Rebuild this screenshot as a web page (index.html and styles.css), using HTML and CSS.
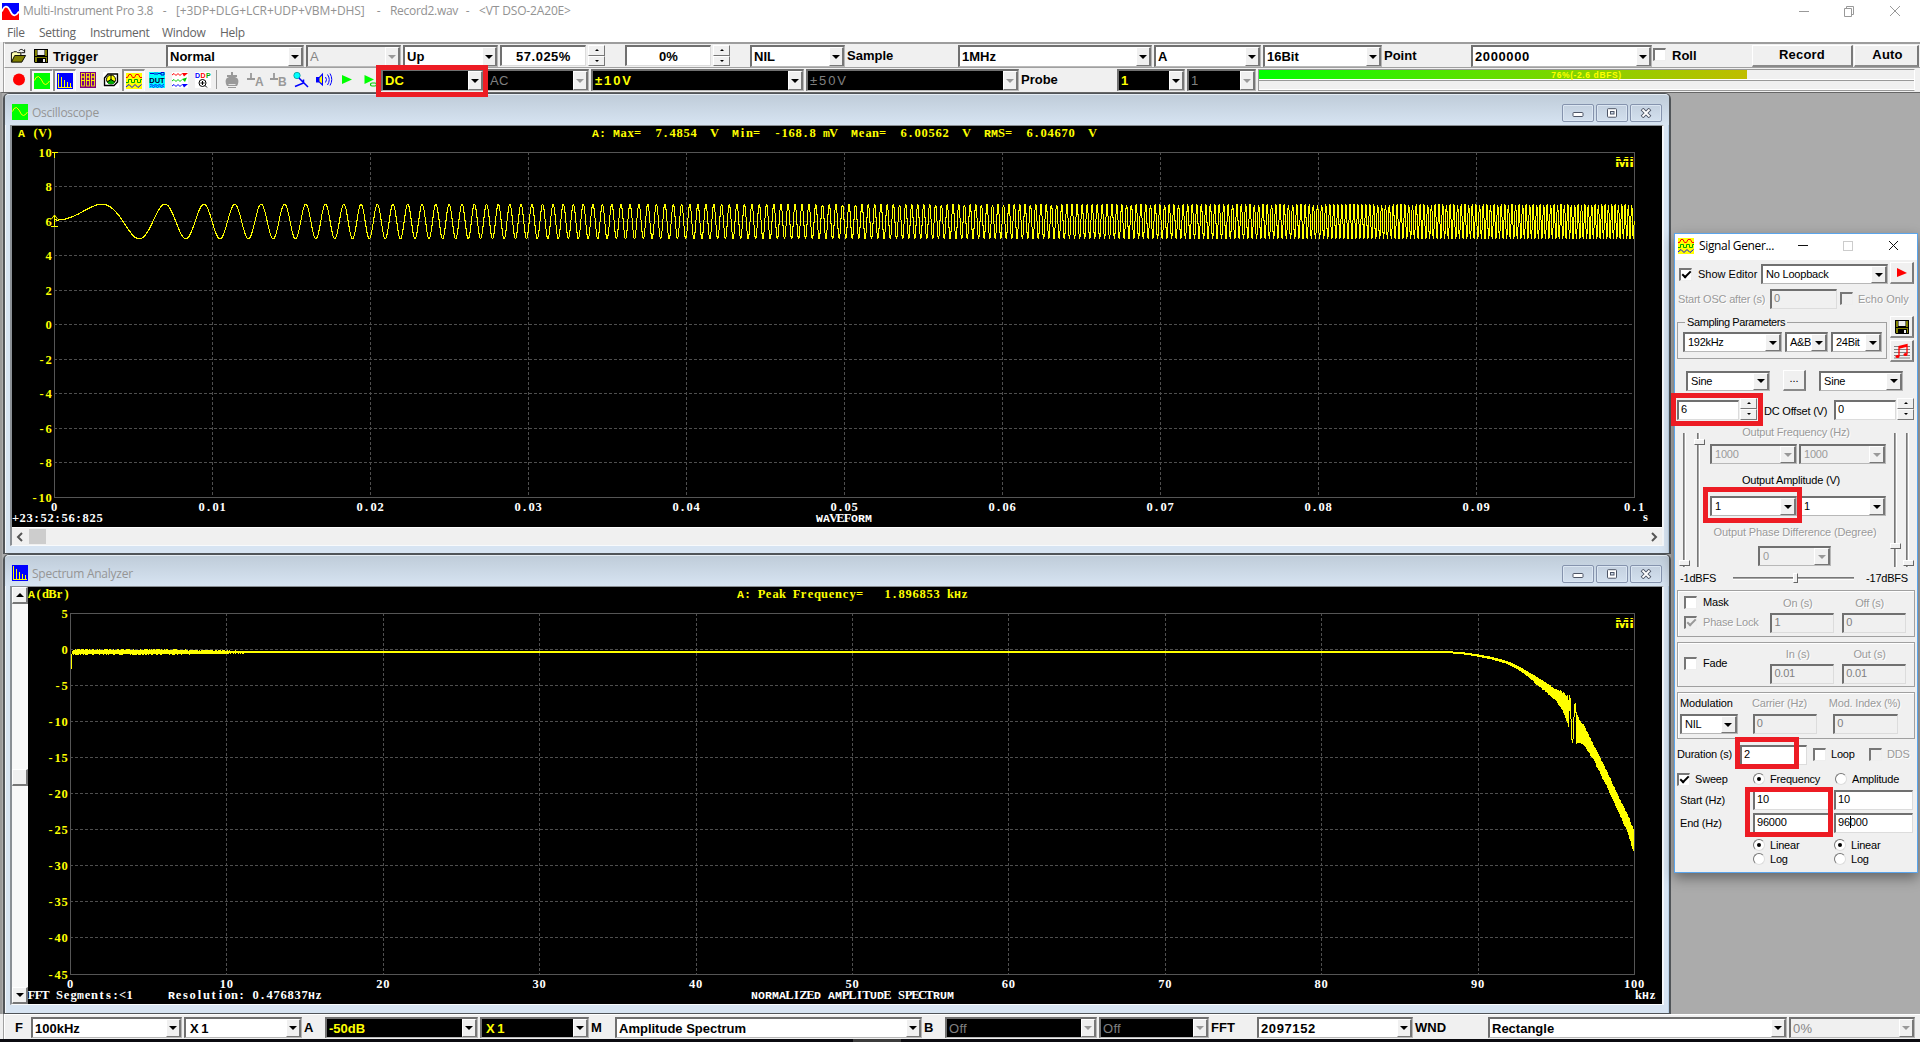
FILE: index.html
```html
<!DOCTYPE html>
<html lang="en">
<head>
<meta charset="utf-8">
<title>Multi-Instrument Pro 3.8</title>
<link rel="stylesheet" href="styles.css">
</head>
<body>
<svg class="defs" width="0" height="0">
  <defs>
    <symbol id="i-scope" viewBox="0 0 16 16"><rect width="16" height="16" fill="#0f0"/><path d="M0.5 7.5L2 4.5L4.5 3.5L7 6L9.5 10.5L11.5 11.5L13.5 10.5L15.500 8" fill="none" stroke="#ff0"/></symbol>
    <symbol id="i-spec" viewBox="0 0 16 16"><rect width="16" height="16" fill="#00f"/><path d="M1.500 1V14M4.500 4V14M7.500 7V14M10.500 9V14M13.500 10V14M1 14.500H15" stroke="#ff0" fill="none"/></symbol>
    <symbol id="i-gen" viewBox="0 0 16 16"><rect width="16" height="16" fill="#ff0"/><path d="M0 4.500H1.500L3 1.500H5L6.500 4.500H8.500L10 1.500H12.500L14 4.500H16" stroke="#f00" fill="none"/><path d="M0 9.500H2.500V6.500H5.500V9.500H8.500V6.500H11.500V9.500H14.500V6.500H16" stroke="#0a0" fill="none"/><path d="M0 14L3 11.500L6 14.500L9 11.500L12 14.500L15.500 11.500" stroke="#00f" fill="none"/></symbol>
    <symbol id="i-save" viewBox="0 0 16 16"><path d="M1 1H15V15H2L1 14Z" fill="#000"/><path d="M2 2H4V8H2ZM12 2H14V8H12Z" fill="#808000"/><path d="M2 9H14V10H2ZM2 10H4V14H2ZM13 10H14V14H13Z" fill="#808000"/><path d="M4.500 2H11.500V7H4.500ZM10 11H12V14H10Z" fill="#efefef"/></symbol>
  </defs>
</svg>

<header class="titlebar">
  <svg class="app-icon" viewBox="0 0 16 16"><rect width="16" height="16" fill="#00f"/><path d="M0 8C2 2 5 2 7.500 7C10 13 13 13 16 8V16H0Z" fill="#f00"/><path d="M0 8C2 2 5 2 7.500 7C10 13 13 13 16 8" fill="none" stroke="#fff" stroke-width="1.600"/></svg>
  <span class="t-name">Multi-Instrument Pro 3.8</span><span class="t-dash">-</span>
  <span class="t-opts">[+3DP+DLG+LCR+UDP+VBM+DHS]</span><span class="t-dash">-</span>
  <span class="t-file">Record2.wav</span><span class="t-dash">-</span>
  <span class="t-dev">&lt;VT DSO-2A20E&gt;</span>
  <svg class="sysbtns" viewBox="0 0 120 20"><path d="M0 10.500H10M45.500 7.500H52.500V15.500H45.500ZM47.500 7V5.500H54.500V13.500H53M91 5L101 15M101 5L91 15" fill="none" stroke="#999"/></svg>
</header>
<nav class="menubar"><span>File</span><span>Setting</span><span>Instrument</span><span>Window</span><span>Help</span></nav>

<section class="toolbar tb-top">
  <div class="lead">
    <svg class="ic-open" viewBox="0 0 18 16"><path d="M1.500 14V4.500H3L4 3.500H7L8 4.500H11.500V7" fill="#ffffb0" stroke="#000"/><path d="M1.500 14.500L5 7.500H16.500L12.500 14.500Z" fill="#808000" stroke="#000"/><path d="M9.500 2.500C11 .5 13 .5 15 3M15.500 1V4.500H12" fill="none" stroke="#000"/></svg>
    <svg class="ic-disk"><use href="#i-save"/></svg>
    <span class="lbl">Trigger</span>
  </div>
  <div class="combo"><span>Normal</span><i></i></div>
  <div class="combo off"><span>A</span><i></i></div>
  <div class="combo"><span>Up</span><i></i></div>
  <div class="edit wide-num">57.025%</div><div class="spin"><i></i><i></i></div>
  <div class="edit">0%</div><div class="spin"><i></i><i></i></div>
  <div class="combo"><span>NIL</span><i></i></div>
  <span class="lbl">Sample</span>
  <div class="combo"><span>1MHz</span><i></i></div>
  <div class="combo"><span>A</span><i></i></div>
  <div class="combo"><span>16Bit</span><i></i></div>
  <span class="lbl">Point</span>
  <div class="combo"><span class="spaced">2000000</span><i></i></div>
  <div class="roll"><b class="check"></b><span>Roll</span></div>
  <button class="btn">Record</button><button class="btn">Auto</button>
</section>

<section class="toolbar tb-mid">
  <div class="icons">
    <b class="cell"><svg viewBox="0 0 16 16"><circle cx="8" cy="7.500" r="6" fill="#f00"/></svg></b>
    <b class="cell on"><svg><use href="#i-scope"/></svg></b>
    <b class="cell on"><svg><use href="#i-spec"/></svg></b>
    <b class="cell"><svg viewBox="0 0 16 16"><rect width="16" height="16" fill="#800080"/><g fill="none" stroke="#ff0" stroke-width=".8"><rect x="1.500" y="1.500" width="3" height="3.500"/><rect x="6.500" y="1.500" width="3" height="3.500"/><rect x="11.500" y="1.500" width="3" height="3.500"/><rect x="1.500" y="5" width="3" height="3.500"/><rect x="6.500" y="5" width="3" height="3.500"/><rect x="11.500" y="5" width="3" height="3.500"/><rect x="1.500" y="8.500" width="3" height="5.500"/><rect x="6.500" y="8.500" width="3" height="5.500"/><rect x="11.500" y="8.500" width="3" height="5.500"/></g></svg></b>
    <b class="cell"><svg viewBox="0 0 16 16"><rect width="16" height="16" fill="#fff"/><path d="M1.500 6L5 2H14.500V10L11 13.500H1.500Z" fill="#fff" stroke="#000" stroke-width="1.400"/><circle cx="8" cy="7.500" r="4.500" fill="#ff0" stroke="#000"/><path d="M4 10L8 7L12 10L10 12H6Z" fill="#0a0"/><path d="M8 3V7.500L4 10M8 7.500L12 10" stroke="#000" fill="none"/></svg></b>
    <b class="cell on"><svg><use href="#i-gen"/></svg></b>
    <b class="cell"><svg viewBox="0 0 16 16"><rect width="16" height="16" fill="#0ff"/><path d="M1 1.500H5M6 .5V3M8 .5V3M9 1.500H12M12 .5V3H15V.5Z" stroke="#00c" fill="none"/><text x="8" y="10.500" class="dut">DUT</text><path d="M1 13L2.500 12L4.500 14L6.500 12L8.500 14L10.500 12L12.500 14L15 12M1 15L2.500 14L4.500 15.500L6.500 14L8.500 15.500L10.500 14L12.500 15.500L15 14" stroke="#00f" fill="none" stroke-width=".8"/></svg></b>
    <b class="cell"><svg viewBox="0 0 16 16"><rect width="16" height="16" fill="#fff"/><g fill="none"><path d="M0 3L2 1.500L4 3.500L6 1.500L8 3.500L10 1.500" stroke="#f00"/><path d="M0 9L2 7.500L4 9.500L6 7.500L8 9.500L10 7.500" stroke="#0c0"/><path d="M0 14L2 12.500L4 14.500L6 12.500L8 14.500L10 12.500" stroke="#00f"/></g><path d="M10 1H16L12 4.500Z" fill="#f00"/><path d="M10 7L15 5.500L13 10Z" fill="#0c0"/><path d="M10 12H16L12 15.500Z" fill="#00f"/></svg></b>
    <b class="cell"><svg viewBox="0 0 16 16"><rect width="16" height="16" fill="#fff"/><text y="6" class="ddp"><tspan x="0" fill="#00f">D</tspan><tspan x="5.500" fill="#f00">D</tspan><tspan x="11" fill="#0a0">P</tspan></text><circle cx="7.500" cy="11" r="3.500" fill="none" stroke="#000"/><path d="M5.500 11H9.500M7.500 9V13M10 13.500L12 15.500" stroke="#000"/></svg></b>
    <b class="sep"></b>
    <b class="cell"><svg viewBox="0 0 16 16" fill="#999"><path d="M7 0H9V3H13V5H11C14 6 15 8 14 12L13 14H3L2 12C1 8 2 6 5 5H3V3H7ZM4 15H12V16H4Z"/><path d="M5 12H11L12 13H4Z" fill="#e4e4e4"/></svg></b>
    <b class="cell"><svg viewBox="0 0 16 16"><path d="M4 1V7M0 7H8" stroke="#999" stroke-width="1.800"/><text x="8" y="14" class="ab">A</text></svg></b>
    <b class="cell"><svg viewBox="0 0 16 16"><path d="M4 1V7M0 7H8" stroke="#999" stroke-width="1.800"/><text x="8" y="14" class="ab">B</text></svg></b>
    <b class="cell"><svg viewBox="0 0 16 16"><circle cx="4" cy="3.500" r="3.200" fill="#0ff" stroke="#088" stroke-width=".7"/><path d="M6 6L15 15M10.500 7.500V11L2 14.500" stroke="#00f" fill="none" stroke-width="1.500"/></svg></b>
    <b class="cell"><svg viewBox="0 0 16 16"><path d="M0 5H3L7 .7V14.300L3 10.500H0Z" fill="#00f"/><path d="M3.500 6L6 3.500V11.500L3.500 9.500Z" fill="#ff0"/><path d="M9.500 5Q11.500 7.500 9.500 10.500M11.500 2.500Q15 7.500 11.500 13M14 1.500Q17.500 7.500 14 13.500" stroke="#00f" fill="none"/></svg></b>
    <b class="cell"><svg viewBox="0 0 16 16"><path d="M3 3L13 7.500L3 12Z" fill="#0f0"/></svg></b>
    <b class="cell"><svg viewBox="0 0 16 16"><path d="M2.500 3L12 7.500L2.500 12Z" fill="#0f0"/><rect x="8.500" y="11" width="6" height="3" rx="1.500" fill="none" stroke="#0c0" stroke-width="1.200"/></svg></b>
  </div>
  <div class="combo dark"><span>DC</span><i></i></div>
  <div class="combo dark off"><span>AC</span><i></i></div>
  <div class="combo dark"><span class="volt">±10V</span><i></i></div>
  <div class="combo dark off"><span class="volt">±50V</span><i></i></div>
  <span class="lbl">Probe</span>
  <div class="combo dark"><span>1</span><i></i></div>
  <div class="combo dark off"><span>1</span><i></i></div>
  <div class="meter"><div class="level"><em></em><span>76%(-2.6 dBFS)</span></div><div class="level"></div></div>
</section>

<main class="mdi">
  <section class="child">
    <div class="ctitle"><svg><use href="#i-scope"/></svg><span>Oscilloscope</span>
      <div class="cbtns">
        <b><svg viewBox="0 0 12 10"><rect x="1" y="4.500" width="10" height="4" rx=".8" fill="#fff" stroke="#4d5566"/></svg></b>
        <b><svg viewBox="0 0 12 10"><rect x="1.500" y=".7" width="9" height="8.500" rx=".8" fill="#fff" stroke="#4d5566"/><rect x="4.500" y="3.500" width="3.500" height="2.500" fill="#cfdcea" stroke="#4d5566"/></svg></b>
        <b><svg viewBox="0 0 12 10"><path d="M2 1L10 9M10 1L2 9" stroke="#4d5566" stroke-width="3.800"/><path d="M2.500 1.500L9.500 8.500M9.500 1.500L2.500 8.500" stroke="#fff" stroke-width="1.800"/></svg></b>
      </div></div>
    <div class="client">
      <svg id="scope" class="plot" width="1650" height="401" viewBox="12 126 1650 401"></svg>
      <div class="hscroll"><svg viewBox="0 0 8 10"><path d="M6 1L2 5L6 9" fill="none" stroke="#555" stroke-width="2"/></svg><i></i><svg class="end" viewBox="0 0 8 10"><path d="M2 1L6 5L2 9" fill="none" stroke="#555" stroke-width="2"/></svg></div>
    </div>
  </section>
  <section class="child">
    <div class="ctitle"><svg><use href="#i-spec"/></svg><span>Spectrum Analyzer</span>
      <div class="cbtns">
        <b><svg viewBox="0 0 12 10"><rect x="1" y="4.500" width="10" height="4" rx=".8" fill="#fff" stroke="#4d5566"/></svg></b>
        <b><svg viewBox="0 0 12 10"><rect x="1.500" y=".7" width="9" height="8.500" rx=".8" fill="#fff" stroke="#4d5566"/><rect x="4.500" y="3.500" width="3.500" height="2.500" fill="#cfdcea" stroke="#4d5566"/></svg></b>
        <b><svg viewBox="0 0 12 10"><path d="M2 1L10 9M10 1L2 9" stroke="#4d5566" stroke-width="3.800"/><path d="M2.500 1.500L9.500 8.500M9.500 1.500L2.500 8.500" stroke="#fff" stroke-width="1.800"/></svg></b>
      </div></div>
    <div class="client side">
      <div class="vscroll"><i class="up"></i><i class="thumb"></i><i class="down"></i></div>
      <svg id="spectrum" class="plot" width="1634" height="417" viewBox="28 587 1634 417"></svg>
    </div>
  </section>
</main>

<footer class="toolbar tb-bottom">
  <span class="lbl f">F</span>
  <div class="combo"><span>100kHz</span><i></i></div>
  <div class="combo"><span class="mult">X1</span><i></i></div>
  <span class="lbl">A</span>
  <div class="combo dark"><span>-50dB</span><i></i></div>
  <div class="combo dark"><span class="mult">X1</span><i></i></div>
  <span class="lbl">M</span>
  <div class="combo"><span>Amplitude Spectrum</span><i></i></div>
  <span class="lbl">B</span>
  <div class="combo dark off"><span>Off</span><i></i></div>
  <div class="combo dark off"><span>Off</span><i></i></div>
  <span class="lbl">FFT</span>
  <div class="combo"><span class="spaced">2097152</span><i></i></div>
  <span class="lbl">WND</span>
  <div class="combo"><span>Rectangle</span><i></i></div>
  <div class="combo off"><span>0%</span><i></i></div>
</footer>
<div class="taskedge"><i></i></div>

<aside class="siggen">
  <div class="sg-title"><svg class="sg-icon"><use href="#i-gen"/></svg><span>Signal Gener...</span><svg class="sg-sys" viewBox="0 0 116 24"><path d="M8 12.500H18M99 8L108 17M108 8L99 17" stroke="#111" fill="none"/><rect x="53.500" y="8.500" width="9" height="9" stroke="#ccc" fill="none"/></svg></div>

  <div class="row r-edit"><b class="check ticked"></b><span class="w-show">Show Editor</span><div class="combo w-loop"><span>No Loopback</span><i></i></div><button class="btn sq"><svg viewBox="0 0 16 16"><path d="M3 3L13 8L3 12Z" fill="#f00"/></svg></button></div>
  <div class="row r-osc dis"><span class="w-osc">Start OSC after (s)</span><div class="edit w67">0</div><b class="check"></b><span>Echo Only</span></div>
  <div class="row r-samp">
    <fieldset><legend>Sampling Parameters</legend><div class="combo w-rate"><span>192kHz</span><i></i></div><div class="combo w-ch"><span>A&amp;B</span><i></i></div><div class="combo w-bit"><span>24Bit</span><i></i></div></fieldset>
    <div class="sidebtns"><button class="btn sq"><svg><use href="#i-save"/></svg></button><button class="btn sq"><svg viewBox="0 0 16 16"><path d="M0 3.500H16M0 6.500H16M0 9.500H16M0 12.500H16M0 15H16" stroke="#666" stroke-width=".8"/><path d="M5 13V3.500L13 1.500V11M5 5L13 3" stroke="#f00" fill="none" stroke-width="1.300"/><ellipse cx="3.500" cy="13.500" rx="2" ry="1.600" fill="#f00"/><ellipse cx="11.500" cy="11.500" rx="2" ry="1.600" fill="#f00"/></svg></button></div>
  </div>
  <div class="row r-wave"><div class="combo w84"><span>Sine</span><i></i></div><button class="btn dots">...</button><div class="combo w84"><span>Sine</span><i></i></div></div>
  <div class="row r-dc"><div class="edit w62">6</div><div class="spin"><i></i><i></i></div><span class="w-dc">DC Offset (V)</span><div class="edit w62">0</div><div class="spin"><i></i><i></i></div></div>
  <div class="levels">
    <div class="slider low"><i></i></div><div class="slider high"><i></i></div>
    <div class="mid">
      <span class="cap dis">Output Frequency (Hz)</span>
      <div class="pair"><div class="combo off"><span>1000</span><i></i></div><div class="combo off"><span>1000</span><i></i></div></div>
      <span class="cap amp">Output Amplitude (V)</span>
      <div class="pair"><div class="combo"><span>1</span><i></i></div><div class="combo"><span>1</span><i></i></div></div>
      <span class="cap ph dis">Output Phase Difference (Degree)</span>
      <div class="combo off w-ph"><span>0</span><i></i></div>
    </div>
    <div class="slider near"><i></i></div><div class="slider low"><i></i></div>
  </div>
  <div class="row r-bal"><span>-1dBFS</span><div class="hslider"><i></i></div><span>-17dBFS</span></div>

  <div class="box b-mask">
    <div class="chk"><div><b class="check"></b><span>Mask</span></div><div class="dis"><b class="check ticked"></b><span>Phase Lock</span></div></div>
    <div class="fld dis"><span>On (s)</span><div class="edit">1</div></div>
    <div class="fld dis"><span>Off (s)</span><div class="edit">0</div></div>
  </div>
  <div class="box b-fade">
    <div class="chk"><div><b class="check"></b><span>Fade</span></div></div>
    <div class="fld dis"><span>In (s)</span><div class="edit">0.01</div></div>
    <div class="fld dis"><span>Out (s)</span><div class="edit">0.01</div></div>
  </div>
  <div class="box b-mod">
    <div class="fld first"><span>Modulation</span><div class="combo"><span>NIL</span><i></i></div></div>
    <div class="fld dis carrier"><span>Carrier (Hz)</span><div class="edit">0</div></div>
    <div class="fld dis idx"><span>Mod. Index (%)</span><div class="edit">0</div></div>
  </div>
  <div class="row r-dur"><span class="w-dur">Duration (s)</span><div class="edit w67">2</div><b class="check"></b><span class="w-lp">Loop</span><div class="dis"><b class="check"></b><span>DDS</span></div></div>
  <div class="row r-sweep"><b class="check ticked"></b><span class="w-sw">Sweep</span><b class="radio sel"></b><span class="w-fr">Frequency</span><b class="radio"></b><span>Amplitude</span></div>
  <div class="row r-se"><span>Start (Hz)</span><div class="edit">10</div><div class="edit">10</div></div>
  <div class="row r-se"><span>End (Hz)</span><div class="edit">96000</div><div class="edit">96<u></u>000</div></div>
  <div class="row r-ll"><b class="radio sel"></b><span>Linear</span><b class="radio sel"></b><span>Linear</span></div>
  <div class="row r-ll"><b class="radio"></b><span>Log</span><b class="radio"></b><span>Log</span></div>
</aside>

<div class="mark m-dc"></div><div class="mark m-offset"></div><div class="mark m-amp"></div><div class="mark m-dur"></div><div class="mark m-range"></div>
<script src="plots.js"></script>
</body>
</html>
```
FILE: styles.css
```css
* { box-sizing: border-box; }
body { margin: 0; width: 1920px; height: 1042px; overflow: hidden; position: relative; background: #f0f0f0; color: #000; display: flex; flex-direction: column; font: bold 13px/16px "Liberation Sans", Arial, sans-serif; white-space: nowrap; }
.defs { position: absolute; }
b, i, em, u { font-style: normal; text-decoration: none; }
svg { display: block; flex: none; }

.titlebar { flex: none; height: 22px; background: #fff; display: flex; align-items: center; padding-left: 2px; color: #929292; font: 12px/16px "Open Sans", "Noto Sans", sans-serif; letter-spacing: -.3px; }
.app-icon { width: 17px; height: 19px; margin-right: 4px; }
.t-name { width: 130px; }
.t-opts { width: 191px; letter-spacing: -.1px; }
.t-file { width: 66px; }
.t-dev { width: 91px; letter-spacing: -.15px; }
.t-dash { width: 23px; text-align: center; }
.sysbtns { width: 120px; height: 20px; margin: 0 1px 0 auto; }
.menubar { flex: none; height: 20px; background: #fff; display: flex; color: #636363; padding: 3px 0 0 7px; font: 12px/16px "Open Sans", "Noto Sans", sans-serif; letter-spacing: -.3px; }
.menubar span:nth-child(1) { width: 32px; }
.menubar span:nth-child(2) { width: 51px; }
.menubar span:nth-child(3) { width: 72px; }
.menubar span:nth-child(4) { width: 58px; }

.toolbar { display: grid; flex: none; background: #f0f0f0; border-left: 1px solid #fff; margin-left: 4px; box-shadow: -1px 0 #a0a0a0; }
.tb-top { height: 25px; padding-top: 1px; border-top: 2px solid #9d9d9d; grid-template-columns: 161px 140px 97px 97px 88px 37px 88px 37px 97px 111px 196px 109px 121px 87px 183px 98px 102px 66px; grid-template-rows: 22px; }
.tb-mid { height: 25px; padding-top: 1px; border-top: 1px solid #a0a0a0; grid-template-columns: 376px 105px 105px 215px 215px 96px 70px 71px 660px; grid-template-rows: 22px; }
.tb-bottom { height: 25px; padding-top: 2px; border-top: 1px solid #fff; grid-template-columns: 26px 153px 120px 21px 155px 111px 24px 309px 21px 154px 112px 46px 158px 73px 301px 128px; grid-template-rows: 21px; }
.lbl { padding: 3px 0 0; }
.lbl.f { padding-left: 10px; }
.lead { display: flex; align-items: center; padding-left: 5px; }
.ic-open { width: 17px; height: 16px; margin-right: 6px; }
.ic-disk { width: 16px; height: 16px; margin-right: 4px; }
.lead .lbl { padding-top: 1px; letter-spacing: .15px; }

.combo { display: flex; background: #fff; border: 1px solid #b8b8b8; border-top: 2px solid #707070; border-left: 2px solid #707070; position: relative; overflow: hidden; }
.toolbar .combo { margin-right: 2px; }
.combo span { flex: 1; padding: 2px 0 0 2px; }
.combo .spaced { letter-spacing: .6px; }
.combo .volt { letter-spacing: 1.9px; }
.combo .mult { letter-spacing: 2.5px; padding-left: 4px; }
.combo > i { flex: none; width: 15px; background: #f0f0f0; border: 1px solid #fff; border-right: 2px solid #777; border-bottom: 1px solid #777; display: flex; align-items: center; justify-content: center; }
.combo > i::before { content: ""; border: 4px solid transparent; border-bottom: 0; border-top: 4px solid #000; }
.combo.off { background: #f0f0f0; color: #858585; }
.combo.off > i::before { border-top-color: #999; }
.combo.dark { background: #000; color: #ff0; }
.combo.dark.off { color: #808080; }
.toolbar .combo.off { font-weight: normal; letter-spacing: .3px; }
.edit { background: #fff; border: 1px solid #dcdcdc; border-top: 2px solid #707070; border-left: 2px solid #707070; }
.toolbar .edit { text-align: center; padding-top: 2px; margin-right: 2px; height: 21px; }
.wide-num { letter-spacing: .5px; }
.spin { width: 17px; height: 21px; display: flex; flex-direction: column; }
.spin i { flex: 1; background: #f0f0f0; border: 1px solid #fff; border-right-color: #777; border-bottom-color: #777; display: flex; align-items: center; justify-content: center; }
.spin i::before { content: ""; border: 2px solid transparent; border-top: 0; border-bottom: 2px solid #000; }
.spin i + i::before { border-top: 2px solid #000; border-bottom: 0; }
.roll { display: flex; padding-top: 3px; }
.roll span { padding-left: 6px; }
.check { flex: none; width: 13px; height: 13px; background: #fff; border: 1px solid #eee; border-top: 2px solid #777; border-left: 2px solid #777; position: relative; }
.roll .check { margin: 0 0 0 -1px; }
.check.ticked::after { content: ""; position: absolute; left: 1px; top: 1px; width: 7px; height: 3px; border-left: 2px solid #000; border-bottom: 2px solid #000; transform: rotate(-45deg); }
.btn { font: inherit; color: inherit; background: #f0f0f0; border: 1px solid #fff; border-right: 2px solid #7a7a7a; border-bottom: 2px solid #8a8a8a; padding: 0; margin: 0 1px 0 0; }
.tb-top .btn { padding-bottom: 1px; letter-spacing: .2px; }
.tb-top .btn:last-child { padding-left: 3px; }

.icons { display: flex; padding-left: 2px; }
.cell { width: 23px; height: 22px; display: flex; align-items: center; justify-content: center; padding-bottom: 1px; }
.cell svg { width: 16px; height: 16px; overflow: visible; }
.cell.on { background: #f8f8f8; border-top: 2px solid #909090; border-left: 2px solid #909090; border-right: 1px solid #fff; }
.sep { width: 1px; margin: 1px 3px 2px 2px; background: #999; }
.dut { font: bold 7.5px "Liberation Sans", Arial, sans-serif; text-anchor: middle; fill: #003; }
.ddp { font: bold 7px "Liberation Sans", Arial, sans-serif; }
.ab { font: bold 12px "Liberation Sans", Arial, sans-serif; fill: #999; }
.meter { margin-right: 3px; border: 1px solid #999; border-right-color: #fff; height: 22px; display: flex; flex-direction: column; }
.level { flex: 1; position: relative; border-bottom: 1px solid #fff; }
.level + .level { border-top: 1px solid #999; }
.level em { display: block; height: 100%; width: 488px; background: linear-gradient(90deg, #0f0, #5fe000 45%, #c0bd00); }
.level span { position: absolute; left: 0; right: 0; top: 0; text-align: center; font: bold 8.5px/10px "Liberation Sans", Arial, sans-serif; letter-spacing: .6px; color: #ff0; }

.mdi { flex: none; height: 922px; border-top: 1px solid #666; border-left: 2px solid #999; background: #ababab; }
.child { width: 1668px; height: 461px; margin-left: 1px; background: #d7e4f2; border: 2px solid #505458; border-bottom-width: 1px; border-top-width: 1px; border-radius: 6px 6px 0 0; padding: 0 5px 0 5px; box-shadow: inset 1px 1px #f5f9fd, inset -1px 0 #b9d0e6; }
.child + .child { height: 460px; }
.ctitle { height: 31px; margin: 0 -5px; padding: 9px 7px 0 7px; display: flex; background: linear-gradient(#bfccd9, #d7e4f2); color: #959595; font: 12px/18px "Open Sans", "Noto Sans", sans-serif; letter-spacing: -.25px; border-radius: 4px 4px 0 0; border-top: 1px solid #e6edf4; }
.ctitle > svg { width: 16px; height: 16px; margin-right: 4px; }
.cbtns { display: flex; gap: 2px; margin-left: auto; }
.cbtns b { width: 32px; height: 18px; border: 1px solid #8593ad; border-radius: 2px; background: linear-gradient(#c3d0df, #d3e0ee); box-shadow: inset 0 0 0 1px #dbe6f2; display: flex; align-items: center; justify-content: center; }
.cbtns svg { width: 12px; height: 10px; }
.client { border: 2px solid #8a8f94; border-top-width: 1px; border-right: 2px solid #f4f7fa; border-bottom: 1px solid #f8fafc; height: 421px; background: #000; }
.client.side { display: flex; height: 419px; }
.hscroll { height: 18px; background: #f0f0f0; display: flex; align-items: center; padding: 0 4px; border-top: 1px solid #fff; }
.hscroll svg { width: 8px; height: 10px; }
.hscroll i { width: 17px; height: 15px; margin-left: 5px; background: #cdcdcd; }
.hscroll .end { margin-left: auto; }
.vscroll { width: 16px; height: 417px; background: #f8f8f8; display: flex; flex-direction: column; }
.vscroll i { height: 17px; background: #f0f0f0; border: 1px solid #fff; border-right: 2px solid #777; border-bottom: 2px solid #777; display: flex; align-items: center; justify-content: center; }
.vscroll .thumb { margin-top: 165px; }
.vscroll .down { margin-top: auto; }
.up::before { content: ""; border: 4px solid transparent; border-top: 0; border-bottom: 4px solid #000; }
.down::before { content: ""; border: 4px solid transparent; border-bottom: 0; border-top: 4px solid #000; }
.plot text { white-space: pre; font: bold 12.5px "Liberation Serif", "Times New Roman", serif; text-anchor: middle; }
.plot .lt { font: bold 11.5px "Liberation Mono", "Courier New", monospace; }
.plot .logo { font: bold 15px "Liberation Sans", Arial, sans-serif; fill: #ff0; text-anchor: end; }
.plot .frame { fill: none; stroke: #555; }
.plot .grid { fill: none; stroke: #4e4e4e; stroke-dasharray: 3 2; }
.plot .trace { fill: none; stroke: #ff0; }
.taskedge { flex: none; height: 3px; background: #0b0b10; display: flex; }
.taskedge i { width: 48px; margin-left: 853px; background: #3c3c3c; }

.siggen { position: absolute; left: 1674px; top: 233px; width: 244px; height: 640px; background: #f0f0f0; border: 1px solid #5aa5ec; box-shadow: 0 5px 12px rgba(0,0,0,.4); font: 11px/13px "Liberation Sans", Arial, sans-serif; letter-spacing: -.2px; display: flex; flex-direction: column; }
.siggen > * { flex: none; }
.sg-title { height: 26px; background: #fff; display: flex; padding: 4px 0 0 3px; font: 12px/16px "Open Sans", "Noto Sans", sans-serif; letter-spacing: -.35px; }
.sg-icon { width: 16px; height: 16px; margin-right: 5px; }
.sg-title span { width: 91px; }
.sg-sys { width: 116px; height: 24px; margin-top: -5px; }
.row { display: flex; align-items: center; }
.siggen .dis, .siggen .combo.off { color: #9a9a9a; }
.dis > span, .cap.dis { text-shadow: 1px 1px #fff; }
.siggen .dis .edit, .siggen .dis .check { background: #f0f0f0; color: #808080; }
.siggen .dis .check.ticked::after { border-color: #999; }
.siggen .combo { height: 20px; }
.siggen .combo span { padding: 2px 0 0 3px; }
.siggen .combo > i { width: 16px; }
.siggen .edit { height: 20px; padding: 1px 0 0 2px; }
.siggen .spin { height: 22px; margin: -3px 0 0 1px; }
.btn.sq { width: 24px; height: 22px; margin: 0; display: flex; align-items: center; justify-content: center; }
.btn.sq svg { width: 16px; height: 16px; }
.w67 { width: 67px; } .w62 { width: 62px; } .w84 { width: 84px; }
.r-edit { height: 24px; margin-top: 1px; padding-left: 4px; }
.w-show { width: 63px; margin-left: 6px; letter-spacing: 0; }
.siggen .w-loop { width: 127px; margin: 2px 2px 0 0; }
.siggen .w-loop span { padding-top: 2px; }
.r-edit .check { margin-top: 2px; } .r-edit .w-show { margin-top: 2px; }
.r-osc { height: 20px; margin-top: 4px; padding-left: 3px; }
.w-osc { width: 92px; } .r-osc .check { margin: -2px 5px 0 3px; } .r-osc span:last-child { letter-spacing: 0; }
.r-samp { height: 50px; align-items: flex-start; margin-top: 7px; padding-left: 2px; }
fieldset { margin: 0 3px 0 0; padding: 3px 0 0 5px; width: 210px; height: 43px; border: 1px solid #a0a0a0; display: flex; gap: 3px; min-width: 0; }
legend { margin-left: 2px; padding: 0 2px; letter-spacing: -.4px; }
.w-rate { width: 99px; } .w-ch { width: 43px; } .w-bit { width: 51px; }
.siggen .w-rate span, .siggen .w-ch span, .siggen .w-bit span { padding-top: 2px; letter-spacing: -.3px; }
.sidebtns { display: flex; flex-direction: column; gap: 2px; }
.r-wave { height: 21px; margin-top: 4px; padding-left: 11px; }
.btn.dots { width: 23px; height: 21px; margin: 0 13px; padding-bottom: 3px; }
.r-dc { height: 20px; margin-top: 9px; padding-left: 2px; }
.w-dc { width: 71px; margin: 2px 0 0 6px; padding-left: 1px; }
.levels { height: 151px; display: flex; padding: 13px 0 0 4px; }
.slider { position: relative; width: 11px; height: 134px; margin-right: 4px; background: linear-gradient(90deg, #777 1px, #a5a5a5 1px 2px, #fff 2px) center/3px 100% no-repeat; }
.slider i, .hslider i { position: absolute; background: #f0f0f0; border: 1px solid #fff; border-right-color: #666; border-bottom-color: #666; }
.slider i { left: 0; width: 11px; height: 6px; }
.low i { bottom: 1px; } .high i { top: 6px; } .near i { top: 110px; }
.mid { width: 176px; margin: -7px 4px 0 2px; display: flex; flex-direction: column; }
.mid + .slider { margin-right: 2px; }
.cap { text-align: center; height: 13px; width: 176px; margin-left: -2px; }
.mid .amp { margin: 10px 0 9px -7px; } .mid .ph { margin: 10px 0 7px -3px; letter-spacing: -.12px; }
.pair { display: grid; grid-template-columns: 87px 87px; gap: 2px; }
.mid .cap + .pair { margin-top: 5px; } .mid .amp + .pair { margin-top: 0; }
.w-ph { width: 73px; margin-left: 48px; }
.r-bal { height: 14px; padding-left: 5px; }
.r-bal span:first-child { width: 53px; }
.hslider { position: relative; width: 121px; height: 12px; margin-right: 12px; background: linear-gradient(#777 1px, #a5a5a5 1px 2px, #fff 2px) center/100% 3px no-repeat; }
.hslider i { left: 60px; top: 1px; width: 5px; height: 10px; }
.box { margin: 5px 0 0 2px; width: 238px; border: 1px solid #a0a0a0; box-shadow: inset 1px 1px #fff; display: flex; padding-left: 6px; }
.b-mask { height: 47px; margin-top: 5px; } .b-fade { height: 45px; } .b-mod { height: 47px; padding-left: 2px; }
.chk { width: 88px; display: flex; flex-direction: column; padding-top: 5px; gap: 7px; }
.chk div { display: flex; gap: 6px; }
.b-fade .chk { padding-top: 14px; }
.fld { width: 65px; margin-right: 8px; padding-top: 6px; }
.fld > span { display: block; text-align: center; height: 16px; padding-right: 9px; }
.b-fade .fld { padding-top: 5px; }
.b-mod .fld { padding-top: 4px; margin-right: 16px; }
.b-mod .fld > span { height: 17px; padding: 0; }
.b-mod .first { width: 58px; margin-right: 15px; }
.b-mod .first > span { text-align: left; letter-spacing: -.1px; }
.b-mod .carrier > span { margin-left: -11px; }
.b-mod .idx > span { margin-left: -10px; margin-right: -8px; }
.r-dur { height: 20px; margin-top: 6px; padding-left: 2px; }
.r-dur > span { margin-top: -1px; }
.w-dur { width: 63px; } .w-lp { width: 38px; }
.r-dur .check { margin: -1px 5px 0 6px; } .r-dur .dis { display: flex; } .r-dur .dis .check { margin: -1px 5px 0 0; } .r-dur .dis span { margin-top: -1px; }
.r-sweep { height: 14px; margin-top: 7px; padding-left: 2px; }
.w-sw { width: 58px; margin-left: 5px; } .w-fr { width: 65px; margin-left: 5px; }
.radio { flex: none; width: 12px; height: 12px; border-radius: 50%; background: #fff; border: 1px solid #777; border-right-color: #ddd; border-bottom-color: #ddd; display: flex; align-items: center; justify-content: center; }
.radio.sel::before { content: ""; width: 4px; height: 4px; border-radius: 50%; background: #000; }
.r-sweep .radio:last-of-type { margin-right: 5px; }
.r-se { height: 20px; margin-top: 3px; padding-left: 5px; }
.r-sweep + .r-se { margin-top: 4px; }
.r-se span { width: 73px; }
.r-se .edit { width: 77px; margin-right: 4px; }
.r-se .edit:last-child { width: 79px; margin: 0; }
.edit u { display: inline-block; width: 1px; height: 12px; margin-right: -1px; vertical-align: -2px; background: #000; }
.r-ll { height: 14px; padding-left: 78px; }
.r-se + .r-ll { margin-top: 5px; }
.r-ll span { width: 64px; margin-left: 5px; }

.mark { position: absolute; border: 5px solid #ed1c24; }
.m-dc { left: 376px; top: 65px; width: 112px; height: 32px; }
.m-offset { left: 1671px; top: 393px; width: 92px; height: 33px; }
.m-amp { left: 1703px; top: 487px; width: 99px; height: 36px; }
.m-dur { left: 1735px; top: 737px; width: 64px; height: 32px; }
.m-range { left: 1745px; top: 787px; width: 88px; height: 50px; }
```
FILE: plots.js
```js
const CELL = 7;
const esc = s => s.replace(/&/g, '&amp;').replace(/</g, '&lt;');

// Fixed-pitch label: every character is centred on its own 7px cell.
// Letters too wide for a cell fall back to the monospaced face.
function label(str, x, y, color) {
  const xs = [...str].map((c, i) => (x + i * CELL + CELL / 2).toFixed(1)).join(' ');
  const body = esc(str).replace(/&lt;|[MmWNROADUGHw]+/g, m => m === '&lt;' ? m : `<tspan class="lt">${m}</tspan>`);
  return `<text x="${xs}" y="${y - .5}" fill="${color}">${body}</text>`;
}
const centred = (s, x, y, c) => label(s, x - s.length * CELL / 2, y, c);
const rightAligned = (s, x, y, c) => label(s, x - s.length * CELL, y, c);

function grid(l, t, r, b, rows) {
  let d = '';
  for (let i = 1; i < 10; i++) {
    const x = Math.round(l + (r - l) * i / 10) + .5;
    d += `M${x} ${t}V${b}`;
  }
  for (let i = 1; i < rows; i++) {
    const y = Math.floor(t + (b - t) * i / rows) + .5;
    d += `M${l} ${y}H${r}`;
  }
  return `<path class="grid" d="${d}"/><rect class="frame" x="${l + .5}" y="${t + .5}" width="${r - l}" height="${b - t}"/>`;
}
function logo(y) {
  return `<text class="logo" x="1634" y="${y + 11}" textLength="19" lengthAdjust="spacingAndGlyphs">MI</text>` +
    `<path d="M1612 ${y + 2.5}H1633M1612 ${y + 5.5}H1633" stroke="#000"/>`;
}

// Oscilloscope: 1 V sweep on a 6 V offset, 10 Hz to 96 kHz in 2 s
let s = grid(54, 152, 1634, 497, 10) + logo(156);
for (let i = 0; i <= 10; i++) {
  s += rightAligned(String(10 - 2 * i), 52, Math.floor(152 + 34.5 * i) + 5, '#ff0');
  s += centred(i === 0 ? '0' : i === 10 ? '0.1' : '0.0' + i, 54 + 158 * i, 511, '#fff');
}
let pts = [], last = '';
for (let px = 0; px <= 1580; px += .25) {
  const t = px / 15800;
  const v = 6 + Math.sin(2 * Math.PI * (10 * t + 24000 * t * t)) + .1 * Math.exp(-px / 8);
  const p = (54.5 + Math.floor(px)) + ',' + (Math.round(152 + (10 - v) * 17.25) + .5);
  if (p !== last) pts.push(last = p);
}
s += `<polyline class="trace" shape-rendering="crispEdges" points="${pts.join(' ')}"/>`;
s += '<path class="trace" d="M52 152.500H58M54.500 153V158M54.500 215V226M51 226.500H58M51.500 219L54.500 215L57.500 219"/>';
s += label('A (V)', 18, 137, '#ff0');
s += label('A: Max=  7.4854  V  Min=  -168.8 mV  Mean=  6.00562  V  RMS=  6.04670  V', 592, 137, '#ff0');
s += label('+23:52:56:825', 12, 522, '#fff') + label('WAVEFORM', 816, 522, '#fff') + label('s', 1642, 521, '#fff');
document.getElementById('scope').innerHTML = s;

// Spectrum analyzer
s = grid(70, 613, 1634, 974, 10) + logo(617);
for (let i = 0; i <= 10; i++) {
  s += rightAligned(String(5 - 5 * i), 68, Math.floor(613 + 36.1 * i) + 5, '#ff0');
  s += centred(String(10 * i), 70 + 156.4 * i, 988, '#fff');
}
let seed = 7;
const rnd = () => (seed = (seed * 16807) % 2147483647) / 2147483647;
let d = 'M71.500 669V656L72.500 652';
for (let x = 73; x < 262; x++) {
  const a = x < 165 ? 2.4 : 2.4 - 1.6 * (x - 165) / 97;
  const u = a * (.7 + .6 * rnd()), w = a * (.6 + .4 * rnd());
  d += `M${x + .5} ${(652 - u).toFixed(1)}V${(652.5 + w).toFixed(1)}`;
}
// [x, centre y, half thickness] along the roll-off
const env = [[72, 652, 1], [1447, 652, 1], [1463, 653.3, 1], [1478, 655.5, 1.2], [1492, 658.3, 1.3], [1507, 662.5, 1.5], [1520, 669, 2], [1533, 678, 3], [1547, 688.5, 4], [1556, 695.5, 5], [1561, 700, 8], [1565, 706, 11], [1568, 711, 14]];
const env2 = [[1577, 729, 13], [1580, 732, 10], [1584, 736, 9], [1593, 752, 7], [1603, 772, 7], [1613, 793, 7], [1617, 802, 7], [1627, 823, 8], [1634, 843, 11]];
const interp = (e, x) => {
  let i = 0;
  while (i < e.length - 2 && x > e[i + 1][0]) i++;
  const k = (x - e[i][0]) / (e[i + 1][0] - e[i][0]);
  return [e[i][1] + k * (e[i + 1][1] - e[i][1]), e[i][2] + k * (e[i + 1][2] - e[i][2])];
};
for (const e of [env, env2]) {
  for (let x = e[0][0]; x < e[e.length - 1][0]; x++) {
    const [y, h] = interp(e, x);
    const j = h > 3 ? 1.5 : 0;
    d += `M${x + .5} ${(y - h - j * rnd()).toFixed(1)}V${(y + h + j * rnd()).toFixed(1)}`;
  }
}
d += 'M1568.500 700V727L1569.500 695V697L1570.500 700V718L1571.500 720V736L1572.500 743L1573.500 735V718L1574.500 716V706L1575.500 703V712L1576.500 713V744';
s += `<path class="trace" shape-rendering="crispEdges" d="${d}"/>`;
s += label('A(dBr)', 28, 598, '#ff0') + label('A: Peak Frequency=   1.896853 kHz', 737, 598, '#ff0');
s += label('FFT Segments:<1', 28, 999, '#fff') + label('Resolution: 0.476837Hz', 168, 999, '#fff');
s += label('NORMALIZED AMPLITUDE SPECTRUM', 751, 999, '#fff') + label('kHz', 1635, 999, '#fff');
document.getElementById('spectrum').innerHTML = s;
```
